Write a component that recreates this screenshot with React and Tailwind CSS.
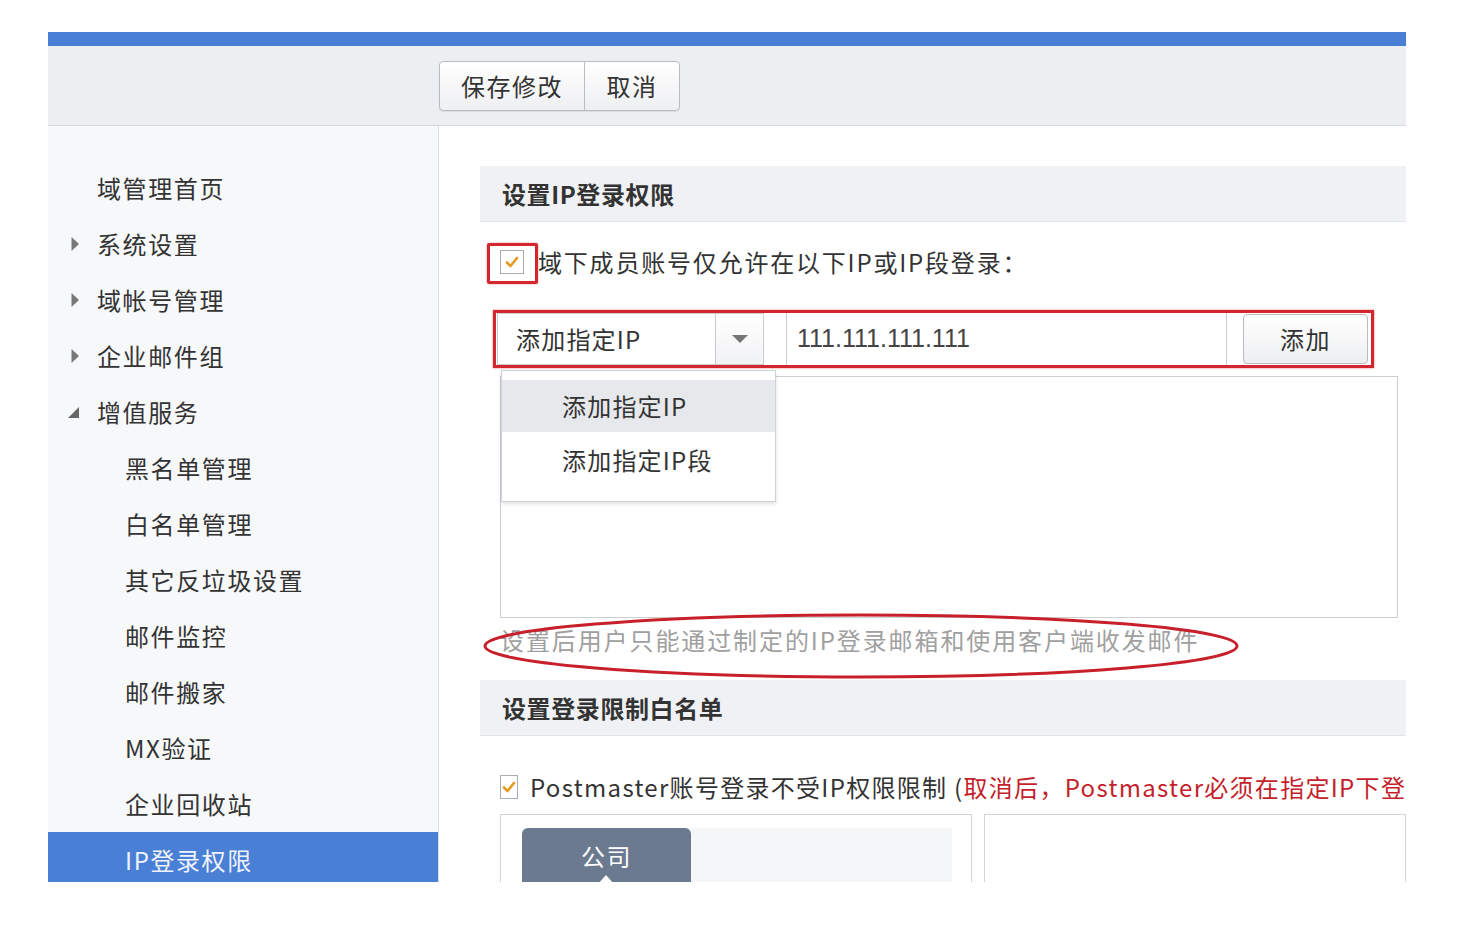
import React from 'react';

const CJK = { fontFamily: '"Noto Sans CJK SC", "Noto Sans", sans-serif' };

function Caret({ open }) {
  if (open) {
    return (
      <svg width="13" height="13" viewBox="0 0 13 13" className="shrink-0">
        <path d="M12 1 L12 12 L1 12 Z" fill="#666" />
      </svg>
    );
  }
  return (
    <svg width="10" height="16" viewBox="0 0 10 16" className="shrink-0">
      <path d="M1.5 1 L9 8 L1.5 15 Z" fill="#777" />
    </svg>
  );
}

function Check() {
  return (
    <span className="flex h-[24px] w-[24px] items-center justify-center border border-[#a9acb2] bg-white">
      <svg width="16" height="16" viewBox="0 0 16 16">
        <path d="M3 8.5 L6.5 12 L13 4" fill="none" stroke="#e39a1f" strokeWidth="2.6" strokeLinecap="round" strokeLinejoin="round" />
      </svg>
    </span>
  );
}

const menu = [
  { label: '域管理首页', level: 1 },
  { label: '系统设置', level: 1, caret: 'closed' },
  { label: '域帐号管理', level: 1, caret: 'closed' },
  { label: '企业邮件组', level: 1, caret: 'closed' },
  { label: '增值服务', level: 1, caret: 'open' },
  { label: '黑名单管理', level: 2 },
  { label: '白名单管理', level: 2 },
  { label: '其它反垃圾设置', level: 2 },
  { label: '邮件监控', level: 2 },
  { label: '邮件搬家', level: 2 },
  { label: 'MX验证', level: 2 },
  { label: '企业回收站', level: 2 },
  { label: 'IP登录权限', level: 2, active: true },
];

function Sidebar() {
  return (
    <aside className="w-[391px] shrink-0 border-r border-[#d9dce1] bg-[#f7f8fa] pt-[34px]">
      {menu.map((m) => (
        <div
          key={m.label}
          className={
            'flex h-[56px] items-center text-[24px] tracking-[1.6px] ' +
            (m.active ? 'bg-[#4a7fd6] text-[#eef3fc]' : 'text-[#333]')
          }
        >
          <span className="flex w-[49px] justify-end pr-[17px]">
            {m.caret === 'closed' && <Caret />}
            {m.caret === 'open' && <Caret open />}
          </span>
          <span className={m.level === 2 ? 'pl-[28px]' : ''}>{m.label}</span>
        </div>
      ))}
    </aside>
  );
}

function SectionHead({ children }) {
  return (
    <div className="flex h-[56px] items-center border-b border-[#e2e4e8] bg-[#f0f1f4] pl-[22px] text-[24px] font-bold tracking-[0.6px] text-[#333]">
      {children}
    </div>
  );
}

export default function App() {
  return (
    <div className="h-[931px] w-full bg-white pl-[48px] pt-[32px]" style={CJK}>
      <div className="flex h-[850px] w-[1358px] flex-col overflow-hidden">
        <div className="h-[14px] shrink-0 bg-[#4a7fd6]" />
        <div className="flex h-[80px] shrink-0 items-start border-b border-[#d6d9de] bg-[#eceef1] pl-[391px] pt-[15px]">
          <div className="flex h-[50px] overflow-hidden rounded-[4px] border border-[#b9bdc3] bg-gradient-to-b from-white to-[#eeeff1] text-[24px] tracking-[1.5px] text-[#333] shadow-[0_1px_1px_rgba(0,0,0,0.08)]">
            <button className="w-[145px] border-r border-[#b9bdc3]">保存修改</button>
            <button className="w-[94px]">取消</button>
          </div>
        </div>

        <div className="flex min-h-0 flex-1">
          <Sidebar />

          <main className="min-w-0 flex-1 overflow-hidden whitespace-nowrap pl-[41px] pt-[40px] text-[#333]">
            <SectionHead>设置IP登录权限</SectionHead>

            <div className="relative mt-[20px] flex h-[40px] items-center pl-[20px] text-[24px] tracking-[1.8px]">
              <Check />
              <span className="ml-[14px]">域下成员账号仅允许在以下IP或IP段登录：</span>
              <span className="absolute left-[7px] top-[1px] h-[41px] w-[51px] rounded-[2px] border-[3px] border-[#d4262f] shadow-[0_0_2px_rgba(212,38,47,0.6)]" />
            </div>

            <div className="relative ml-[13px] mt-[28px] flex h-[58px] w-[881px] items-center border-[3px] border-[#d4262f] px-[1px] shadow-[0_0_2px_rgba(212,38,47,0.6)]">
              <div className="flex h-[52px] w-[267px] border border-[#c9ccd1] bg-white">
                <span className="flex flex-1 items-center pl-[18px] text-[24px] tracking-[1.2px]">添加指定IP</span>
                <span className="flex w-[48px] items-center justify-center border-l border-[#c9ccd1] bg-gradient-to-b from-white to-[#f1f2f4]">
                  <svg width="18" height="10" viewBox="0 0 18 10">
                    <path d="M1 1 L17 1 L9 9 Z" fill="#777" />
                  </svg>
                </span>
              </div>
              <div className="ml-[22px] flex h-[52px] w-[441px] items-center border-x border-[#c9ccd1] bg-white pl-[10px] text-[25px] text-[#444]" style={{ fontFamily: '"Liberation Sans", Arial, sans-serif' }}>
                111.111.111.111
              </div>
              <button className="ml-[16px] h-[50px] w-[125px] rounded-[4px] border border-[#b9bdc3] bg-gradient-to-b from-white to-[#eeeff1] text-[24px] tracking-[1.5px]">
                添加
              </button>

              <div className="absolute left-[5px] top-[57px] z-10 h-[132px] w-[275px] border border-[#cfd2d6] bg-white pt-[9px] text-[24px] tracking-[1.2px] shadow-[0_2px_4px_rgba(0,0,0,0.12)]">
                <div className="flex h-[52px] items-center bg-[#e6e8eb] pl-[60px]">添加指定IP</div>
                <div className="mt-[2px] flex h-[52px] items-center pl-[60px]">添加指定IP段</div>
              </div>
            </div>

            <div className="ml-[20px] mt-[8px] h-[242px] w-[898px] border border-[#cbced3] bg-white" />

            <div className="relative ml-[20px] flex h-[44px] items-center text-[24px] tracking-[1.9px] text-[#a0a0a0]">
              设置后用户只能通过制定的IP登录邮箱和使用客户端收发邮件
              <svg className="absolute left-[-19px] top-[-7px]" width="760" height="70" viewBox="0 0 760 70">
                <ellipse cx="380" cy="35" rx="376" ry="31" fill="none" stroke="#c8202a" strokeWidth="3" />
              </svg>
            </div>

            <div className="mt-[18px]">
              <SectionHead>设置登录限制白名单</SectionHead>
            </div>

            <div className="mt-[31px] flex h-[40px] items-center pl-[20px] text-[24px]">
              <Check />
              <span className="ml-[12px] tracking-[1.3px]">
                Postmaster账号登录不受IP权限限制 (
                <span className="text-[#c41f2c]">取消后，Postmaster必须在指定IP下登录</span>
              </span>
            </div>

            <div className="ml-[20px] mt-[7px] flex gap-[12px]">
              <div className="h-[120px] w-[472px] shrink-0 border border-[#d2d5d9] bg-white pl-[21px] pr-[19px] pt-[13px]">
                <div className="flex h-[100px] bg-[#f5f6f8]">
                  <div className="relative flex h-[100px] w-[169px] justify-center rounded-t-[6px] bg-[#6c7a90] pt-[10px] text-[24px] tracking-[1.5px] text-white">
                    公司
                    <svg className="absolute left-[76px] top-[46px]" width="16" height="10" viewBox="0 0 16 10">
                      <path d="M0 10 L8 1 L16 10 Z" fill="#fff" />
                    </svg>
                  </div>
                </div>
              </div>
              <div className="h-[120px] flex-1 border border-[#d2d5d9] bg-white" />
            </div>
          </main>
        </div>
      </div>
    </div>
  );
}
